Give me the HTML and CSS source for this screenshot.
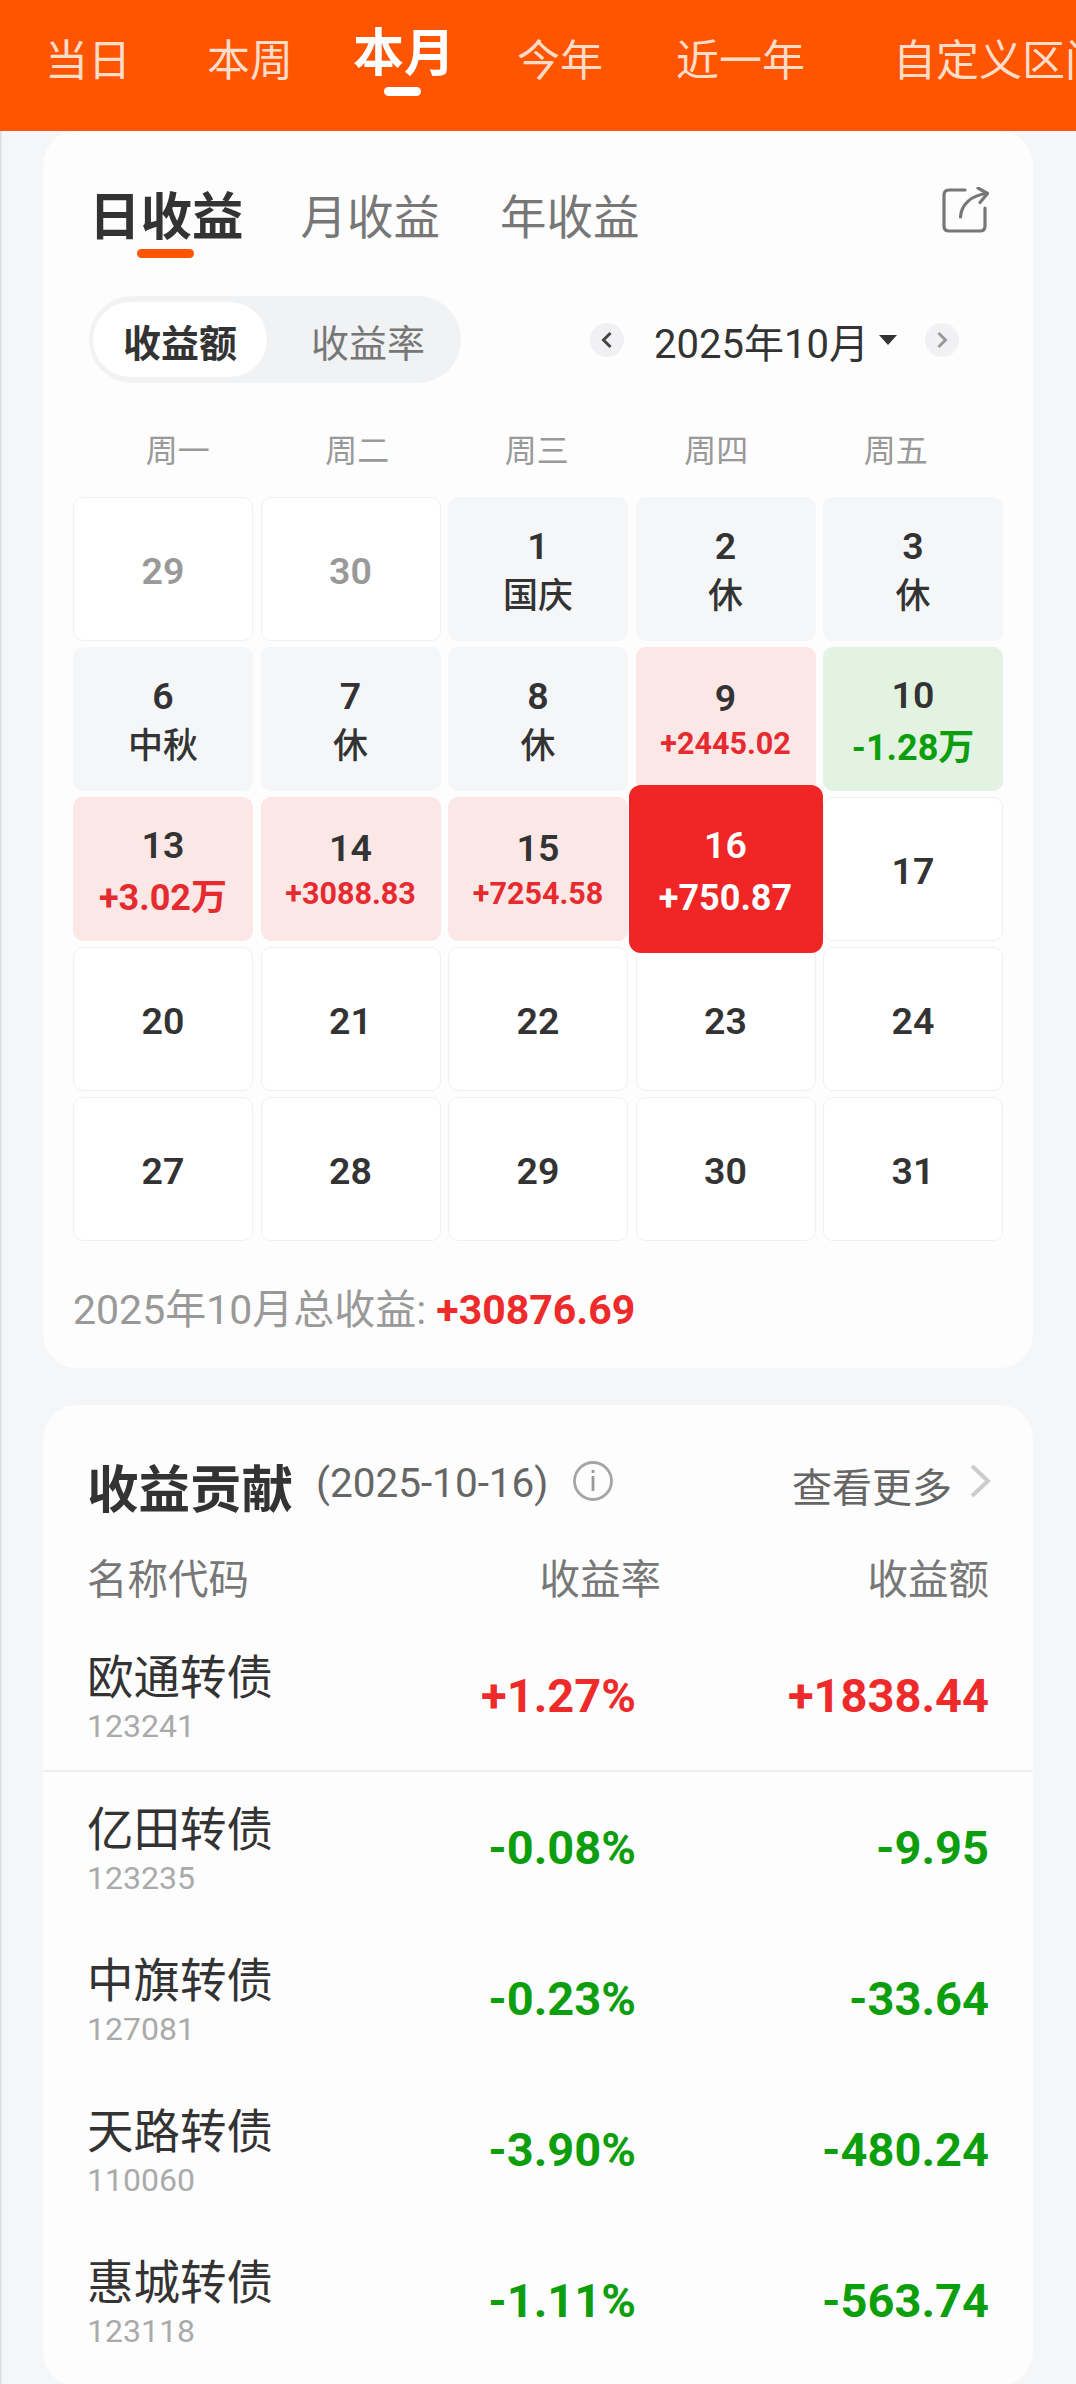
FILE: index.html
```html
<!DOCTYPE html>
<html>
  <head>
    <title>收益日历</title>
    <link rel="stylesheet" href="styles.css">
  </head>
  <body>
    <nav class="range-bar">
      <span class="range-item w-a">当日</span>
      <span class="range-item w-b">本周</span>
      <span class="range-item range-active w-c">本月</span>
      <span class="range-item w-d">今年</span>
      <span class="range-item w-e">近一年</span>
      <span class="range-item range-cut">自定义区间</span>
    </nav>

    <section class="card calendar-card">
      <div class="tabs-row">
        <span class="tab tab-active">日收益</span>
        <span class="tab">月收益</span>
        <span class="tab">年收益</span>
        <svg class="share-icon" width="48" height="48" viewBox="0 0 48 48" fill="none" stroke="#777" stroke-width="3.200" stroke-linecap="round" stroke-linejoin="round">
          <path d="M24 3H8Q3 3 3 8V39Q3 44 8 44H39Q44 44 44 39V21"/>
          <path d="M19.500 30C20 18 30 8 46 6.500"/>
          <path d="M37 1L46.500 6.500L39 15.500"/>
        </svg>
      </div>

      <div class="filter-row">
        <div class="switcher">
          <span class="switch-item switch-active">收益额</span>
          <span class="switch-item">收益率</span>
        </div>
        <div class="month-picker">
          <span class="month-arrow">
            <svg width="14" height="18" viewBox="0 0 14 18" fill="none" stroke="#444" stroke-width="3"><path d="M10.500 2L3.500 9L10.500 16"/></svg>
          </span>
          <span class="month-label">2025年10月</span>
          <span class="month-caret"></span>
          <span class="month-arrow">
            <svg width="14" height="18" viewBox="0 0 14 18" fill="none" stroke="#999" stroke-width="3"><path d="M3.500 2L10.500 9L3.500 16"/></svg>
          </span>
        </div>
      </div>

      <div class="week-row">
        <span>周一</span><span>周二</span><span>周三</span><span>周四</span><span>周五</span>
      </div>

      <div class="cal-grid">
        <div class="cell"><b class="muted">29</b></div>
        <div class="cell"><b class="muted">30</b></div>
        <div class="cell off"><b>1</b><i>国庆</i></div>
        <div class="cell off"><b>2</b><i>休</i></div>
        <div class="cell off"><b>3</b><i>休</i></div>

        <div class="cell off"><b>6</b><i>中秋</i></div>
        <div class="cell off"><b>7</b><i>休</i></div>
        <div class="cell off"><b>8</b><i>休</i></div>
        <div class="cell up tight"><b>9</b><em>+2445.02</em></div>
        <div class="cell down tall"><b>10</b><em class="big">-1.28万</em></div>

        <div class="cell up tall"><b>13</b><em class="big">+3.02万</em></div>
        <div class="cell up tight"><b>14</b><em>+3088.83</em></div>
        <div class="cell up tight"><b>15</b><em>+7254.58</em></div>
        <div class="cell today tall"><b>16</b><em class="big">+750.87</em></div>
        <div class="cell"><b>17</b></div>

        <div class="cell"><b>20</b></div>
        <div class="cell"><b>21</b></div>
        <div class="cell"><b>22</b></div>
        <div class="cell"><b>23</b></div>
        <div class="cell"><b>24</b></div>

        <div class="cell"><b>27</b></div>
        <div class="cell"><b>28</b></div>
        <div class="cell"><b>29</b></div>
        <div class="cell"><b>30</b></div>
        <div class="cell"><b>31</b></div>
      </div>

      <p class="month-total">2025年10月总收益: <strong>+30876.69</strong></p>
    </section>

    <section class="card contrib-card">
      <div class="contrib-head">
        <h2>收益贡献</h2>
        <span class="contrib-date">(2025-10-16)</span>
        <svg class="info-icon" width="42" height="42" viewBox="0 0 42 42" fill="none" stroke="#A5A5A5" stroke-width="2.800">
          <circle cx="21" cy="21" r="18.500"/>
          <path d="M21 16V31" stroke="#999"/>
          <path d="M21 10V13" stroke="#999"/>
        </svg>
        <span class="more">查看更多</span>
        <svg class="more-arrow" width="24" height="36" viewBox="0 0 24 36" fill="none" stroke="#CCC" stroke-width="4"><path d="M4 3L20 18L4 33"/></svg>
      </div>

      <div class="row col-titles">
        <span>名称代码</span>
        <span class="num">收益率</span>
        <span class="num">收益额</span>
      </div>

      <div class="row bond lined">
        <div><div class="bond-name">欧通转债</div><div class="bond-code">123241</div></div>
        <span class="num red">+1.27%</span>
        <span class="num red">+1838.44</span>
      </div>
      <div class="row bond">
        <div><div class="bond-name">亿田转债</div><div class="bond-code">123235</div></div>
        <span class="num green">-0.08%</span>
        <span class="num green">-9.95</span>
      </div>
      <div class="row bond">
        <div><div class="bond-name">中旗转债</div><div class="bond-code">127081</div></div>
        <span class="num green">-0.23%</span>
        <span class="num green">-33.64</span>
      </div>
      <div class="row bond">
        <div><div class="bond-name">天路转债</div><div class="bond-code">110060</div></div>
        <span class="num green">-3.90%</span>
        <span class="num green">-480.24</span>
      </div>
      <div class="row bond">
        <div><div class="bond-name">惠城转债</div><div class="bond-code">123118</div></div>
        <span class="num green">-1.11%</span>
        <span class="num green">-563.74</span>
      </div>
    </section>
  </body>
</html>
```

FILE: styles.css
```css
html, body {
  margin: 0;
  padding: 0;
}
body {
  width: 1076px;
  height: 2384px;
  overflow: hidden;
  background-color: #F5F6F8;
  box-shadow: inset 1.500px 0 0 #DADDE1;
  font-family: Roboto, "Noto Sans CJK SC", sans-serif;
  color: #333;
}
.range-bar {
  height: 131px;
  background-color: #FF5500;
  display: flex;
  padding-left: 45px;
  overflow: hidden;
  white-space: nowrap;
  box-sizing: border-box;
}
.range-item {
  flex: none;
  font-size: 43px;
  line-height: 58px;
  margin-top: 32px;
  color: #FFDCC8;
}
.w-a { width: 162px; }
.w-b { width: 146px; }
.w-c { width: 164px; }
.w-d { width: 159px; }
.w-e { width: 217px; }
.range-active {
  position: relative;
  font-size: 51px;
  font-weight: 700;
  color: #FFF;
  margin-top: 25px;
}
.range-active::after {
  content: "";
  position: absolute;
  left: 31px;
  top: 62px;
  width: 37px;
  height: 9px;
  border-radius: 5px;
  background-color: #FFF;
}
.card {
  margin: 0 43px;
  background-color: #FDFDFD;
  border-radius: 34px;
}
.calendar-card {
  height: 1237px;
  padding: 0 30px;
  box-sizing: border-box;
  overflow: hidden;
}
.tabs-row {
  display: flex;
  align-items: flex-start;
  padding: 56px 0 0 16px;
  height: 165px;
  box-sizing: border-box;
}
.tab {
  font-size: 46.500px;
  line-height: 62px;
  color: #777;
  margin-right: 60px;
  position: relative;
}
.tab-active {
  font-size: 51.500px;
  font-weight: 700;
  color: #333;
  margin-right: 57px;
}
.tab-active::after {
  content: "";
  position: absolute;
  left: 48px;
  top: 62px;
  width: 57px;
  height: 9px;
  border-radius: 5px;
  background-color: #FF5500;
}
.share-icon {
  margin-left: auto;
  margin-top: 0;
  margin-right: 14px;
}
.filter-row {
  display: flex;
  align-items: center;
  justify-content: space-between;
  padding-left: 16px;
  height: 87px;
}
.switcher {
  display: flex;
  align-items: center;
  width: 372px;
  height: 87px;
  border-radius: 44px;
  background-color: #F1F2F4;
  box-sizing: border-box;
  padding: 6px 4px;
}
.switch-item {
  width: 174px;
  height: 75px;
  line-height: 84px;
  text-align: center;
  font-size: 38px;
  color: #777;
  border-radius: 38px;
}
.switch-active {
  background-color: #FFF;
  color: #333;
  font-weight: 700;
  margin-right: 14px;
}
.month-picker {
  display: flex;
  align-items: center;
  margin-right: 44px;
}
.month-arrow {
  width: 34px;
  height: 34px;
  border-radius: 50%;
  background-color: #F1F1F3;
  display: flex;
  align-items: center;
  justify-content: center;
}
.month-label {
  font-size: 40px;
  line-height: 50px;
  color: #333;
  margin: 11px 0 0 30px;
}
.month-caret {
  width: 0;
  height: 0;
  border-left: 9px solid transparent;
  border-right: 9px solid transparent;
  border-top: 10px solid #333;
  margin: 0 28px 0 10px;
}
.week-row {
  display: grid;
  grid-template-columns: repeat(5, 179.500px);
  height: 114px;
  padding: 46px 0 0 15px;
  box-sizing: border-box;
  font-size: 32px;
  line-height: 44px;
  color: #999;
  text-align: center;
}
.cal-grid {
  display: grid;
  grid-template-columns: repeat(5, 180px);
  grid-auto-rows: 144px;
  column-gap: 7.500px;
  row-gap: 6px;
}
.cell {
  border: 1.500px solid #F0F0F0;
  border-radius: 10px;
  box-sizing: border-box;
  background-color: #FFF;
  padding-top: 4px;
  display: flex;
  flex-direction: column;
  align-items: center;
  justify-content: center;
  position: relative;
}
.tight {
  padding-top: 0;
}
.tall {
  padding-top: 8px;
}
.cell b {
  font-size: 37.500px;
  font-weight: 600;
  line-height: 50px;
  color: #333;
}
.cell b.muted {
  color: #999;
}
.cell i {
  font-style: normal;
  font-size: 35px;
  font-weight: 500;
  line-height: 51px;
  color: #333;
}
.cell em {
  font-style: normal;
  font-weight: 700;
  font-size: 30.500px;
  line-height: 42px;
}
.cell em.big {
  font-size: 36px;
  line-height: 56px;
}
.off {
  background-color: #F5F6F8;
  border-color: #F5F6F8;
}
.up {
  background-color: #FCE7E7;
  border-color: #FCE7E7;
}
.up em {
  color: #E62B30;
}
.down {
  background-color: #E2F3E2;
  border-color: #E2F3E2;
}
.down em {
  color: #0C9E0C;
}
.today {
  background-color: #F02525;
  border: none;
  border-radius: 12px;
  margin: -12px -7px;
  z-index: 2;
}
.today b, .today em {
  color: #FFF;
}
.month-total {
  margin: 43px 0 0;
  font-size: 41px;
  line-height: 52px;
  color: #999;
}
.month-total strong {
  color: #EE2A2A;
  font-weight: 700;
}
.contrib-card {
  margin-top: 37px;
  height: 981px;
  overflow: hidden;
}
.contrib-head {
  display: flex;
  align-items: center;
  height: 150px;
  padding: 0 41px 0 44px;
  box-sizing: border-box;
}
.contrib-head h2 {
  margin: 10px 0 0;
  font-size: 51.500px;
  font-weight: 700;
  color: #333;
}
.contrib-date {
  font-size: 40.500px;
  color: #666;
  margin: 6px 0 0 23px;
}
.info-icon {
  margin: 2px 0 0 24px;
}
.more {
  margin: 10px 0 0 auto;
  font-size: 40px;
  color: #666;
}
.more-arrow {
  margin: 2px 0 0 16px;
}
.row {
  display: grid;
  align-items: center;
  padding: 0 44px;
}
.col-titles {
  grid-template-columns: 1fr 220px 328px;
  height: 50px;
  font-size: 40.500px;
  line-height: 50px;
  color: #777;
  margin-bottom: 16px;
}
.num {
  text-align: right;
}
.bond {
  grid-template-columns: 1fr 220px 353px;
  height: 151px;
  box-sizing: border-box;
  font-size: 47px;
  font-weight: 700;
}
.lined {
  border-bottom: 2px solid #EEE;
}
.bond-name {
  font-size: 46.500px;
  font-weight: 400;
  line-height: 60px;
  color: #333;
}
.bond-code {
  font-size: 32px;
  font-weight: 400;
  line-height: 36px;
  color: #AAA;
}
.red {
  color: #EE2A2A;
}
.green {
  color: #0C9E0C;
}
```
